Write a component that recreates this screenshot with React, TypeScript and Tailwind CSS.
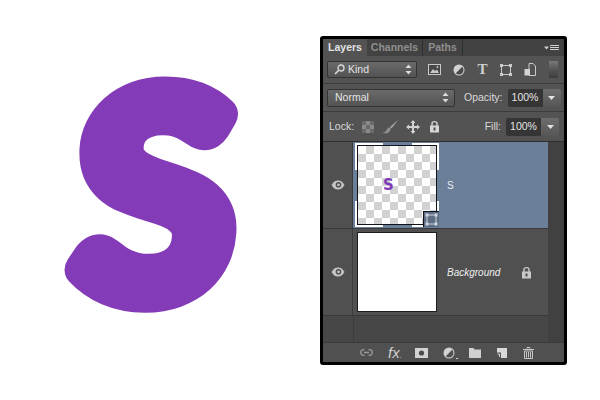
const FONT = "font-['Liberation_Sans',sans-serif]";

function Spinner() {
  return (
    <svg width="7" height="11" viewBox="0 0 7 11" className="shrink-0">
      <path d="M3.5 0.5 L6.5 4 H0.5 Z M3.5 10.5 L6.5 7 H0.5 Z" fill="#dcdcdc" />
    </svg>
  );
}

function Caret() {
  return (
    <svg width="7" height="4" viewBox="0 0 7 4">
      <path d="M0 0 H7 L3.5 4 Z" fill="#e2e2e2" />
    </svg>
  );
}

function PercentField() {
  return (
    <div className="flex h-[18px] w-[53px] rounded-[2px] overflow-hidden">
      <div className="flex w-[35px] items-center justify-center bg-[#353535] text-[10.5px] text-[#e4e4e4]">100%</div>
      <div className="flex flex-1 items-center justify-center bg-gradient-to-b from-[#6d6d6d] to-[#565656]">
        <Caret />
      </div>
    </div>
  );
}

function Eye() {
  return (
    <svg width="14" height="10" viewBox="0 0 14 10">
      <path d="M0.5 5 C3 1 5 0.5 7 0.5 C9 0.5 11 1 13.5 5 C11 9 9 9.5 7 9.5 C5 9.5 3 9 0.5 5 Z" fill="#c4c4c4" />
      <circle cx="7.5" cy="4.8" r="2.8" fill="#4f4f4f" />
      <circle cx="7.5" cy="4.8" r="1.4" fill="#c4c4c4" />
    </svg>
  );
}

function Padlock({ color = "#c9c9c9" }: { color?: string }) {
  return (
    <svg width="11" height="13" viewBox="0 0 11 13">
      <path d="M3 6 V3.5 C3 1 8 1 8 3.5 V6" fill="none" stroke={color} strokeWidth="1.4" />
      <rect x="1" y="5.5" width="9" height="7" fill={color} />
      <rect x="4.5" y="7.5" width="2" height="3" fill="#505050" />
    </svg>
  );
}

function AdjustmentDisc({ cut }: { cut: string }) {
  return (
    <svg width="12" height="12" viewBox="0 0 12 12">
      <circle cx="6" cy="6" r="5.5" fill="#d2d2d2" />
      <path d="M9.200 2.800 A4.500 4.500 0 0 1 2.800 9.200 Z" fill={cut} />
    </svg>
  );
}

function FilterIcons() {
  return (
    <div className="ml-[11px] flex items-center gap-[12px]">
      <svg width="13" height="11" viewBox="0 0 13 11">
        <rect x="0.5" y="0.5" width="12" height="10" fill="#474747" stroke="#c9c9c9" />
        <path d="M2 9 L5 5 L7 7 L9 5.5 L11 9 Z" fill="#c9c9c9" />
        <circle cx="9.5" cy="3" r="1" fill="#c9c9c9" />
      </svg>
      <AdjustmentDisc cut="#4a4a4a" />
      <span className="font-['Liberation_Serif',serif] text-[15px] font-bold leading-none text-[#cfcfcf] w-[11px] text-center">T</span>
      <svg width="12" height="12" viewBox="0 0 12 12">
        <rect x="1.5" y="1.5" width="9" height="9" fill="none" stroke="#c9c9c9" />
        <path d="M0 0 H3 V3 H0 Z M9 0 H12 V3 H9 Z M0 9 H3 V12 H0 Z M9 9 H12 V12 H9 Z" fill="#c9c9c9" />
      </svg>
      <svg width="12" height="13" viewBox="0 0 12 13">
        <path d="M5 0.5 H9 L11.5 3 V12.5 H5 Z" fill="none" stroke="#c9c9c9" />
        <path d="M0.5 6 H6 V12.5 H0.5 Z" fill="#d4d4d4" />
      </svg>
    </div>
  );
}

function LockRow() {
  return (
    <div className="flex h-[30px] items-center pl-[6px] pr-[5px] text-[10.5px] text-[#dadada] border-t border-[#3c3c3c]">
      <span>Lock:</span>
      <svg width="12" height="12" viewBox="0 0 12 12" className="ml-[8px]">
        <rect width="12" height="12" fill="#8a8a8a" />
        <path d="M0 0 H4 V4 H0 Z M8 0 H12 V4 H8 Z M4 4 H8 V8 H4 Z M0 8 H4 V12 H0 Z M8 8 H12 V12 H8 Z" fill="#6a6a6a" />
      </svg>
      <svg width="17" height="15" viewBox="0 0 17 15" className="ml-[8px]">
        <path d="M16.5 0.5 L8 8 L9.5 9.5 Z" fill="#a8a8a8" />
        <path d="M7.5 8.5 C5 8.5 5 11 3.5 12.5 C2.5 13.5 1 13.5 0 13.5 C3 15 7 15 9 10 Z" fill="#8f8f8f" />
      </svg>
      <svg width="14" height="14" viewBox="0 0 14 14" className="ml-[7px]">
        <path d="M7 0 L9.5 3 H8 V6 H11 V4.5 L14 7 L11 9.5 V8 H8 V11 H9.5 L7 14 L4.500 11 H6 V8 H3 V9.5 L0 7 L3 4.500 V6 H6 V3 H4.500 Z" fill="#d2d2d2" />
      </svg>
      <div className="ml-[9px]"><Padlock color="#d6d6d6" /></div>
      <span className="ml-auto mr-[5px]">Fill:</span>
      <PercentField />
    </div>
  );
}

function TextThumb() {
  return (
    <div className="relative ml-[2px] mt-[1px] h-[84px] w-[84px] border-2 border-white">
      {/* Gaps in the white selection frame, at the middle of each side */}
      <div className="absolute left-[26px] top-[-2px] h-[2px] w-[29px] bg-[#6b7f99]" />
      <div className="absolute left-[26px] bottom-[-2px] h-[2px] w-[29px] bg-[#6b7f99]" />
      <div className="absolute left-[-2px] top-[25px] h-[31px] w-[2px] bg-[#6b7f99]" />
      <div className="absolute right-[-2px] top-[25px] h-[31px] w-[2px] bg-[#6b7f99]" />
      <div className="flex h-full w-full items-center border border-[#10141c] bg-white bg-[conic-gradient(#d2d2d2_25%,#ffffff_0_50%,#d2d2d2_0_75%,#ffffff_0)] bg-[length:16px_16px] pl-[25px]">
        <span className="font-['DejaVu_Sans',sans-serif] text-[15px] font-bold leading-none text-[#7f3bb8]">S</span>
      </div>
      <div className="absolute bottom-[-2px] right-[-2px] flex h-[16px] w-[16px] items-center justify-center border-l border-t border-[#10141c] bg-[#5d6d83]">
        <svg width="13" height="13" viewBox="0 0 13 13">
          <rect x="2" y="2" width="9" height="9" fill="none" stroke="#cfd6df" />
          <path d="M0.500 0.500 H3.500 V3.500 H0.500 Z M9.500 0.500 H12.500 V3.500 H9.500 Z M0.500 9.500 H3.500 V12.500 H0.500 Z M9.500 9.500 H12.500 V12.500 H9.500 Z" fill="#cfd6df" />
        </svg>
      </div>
    </div>
  );
}

function Footer() {
  return (
    <div className="flex h-[20px] items-center border-t border-[#3b3b3b] bg-[#505050] pl-[37px]">
      <svg width="13" height="7" viewBox="0 0 13 7">
        <path d="M4.500 0.700 H3.500 A2.800 2.800 0 0 0 3.500 6.300 H4.500 M8.500 0.700 H9.500 A2.800 2.800 0 0 1 9.500 6.300 H8.500 M4 3.500 H9" fill="none" stroke="#9a9a9a" strokeWidth="1.300" />
      </svg>
      <span className="ml-[15px] w-[17px] font-['Liberation_Sans',sans-serif] text-[15px] italic leading-none text-[#cfcfcf]">fx<span className="text-[8px]">.</span></span>
      <svg width="13" height="10" viewBox="0 0 13 10" className="ml-[10px]">
        <rect width="13" height="10" fill="#d2d2d2" />
        <circle cx="6.500" cy="5" r="2.600" fill="#4a4a4a" />
      </svg>
      <div className="ml-[15px] flex w-[15px] items-end">
        <AdjustmentDisc cut="#505050" />
        <span className="ml-[1px] h-[1px] w-[2px] bg-[#cfcfcf]" />
      </div>
      <svg width="12" height="10" viewBox="0 0 12 10" className="ml-[11px]">
        <path d="M0 0 H4.500 L5.500 1.500 H12 V10 H0 Z" fill="#d0d0d0" />
      </svg>
      <svg width="10" height="10" viewBox="0 0 10 10" className="ml-[16px]">
        <path d="M0 0 H10 V10 H4 V4.500 H0 Z" fill="#d8d8d8" />
        <path d="M0.500 6 H2.500 V9" fill="none" stroke="#d8d8d8" />
      </svg>
      <svg width="11" height="12" viewBox="0 0 11 12" className="ml-[16px]">
        <path d="M4 1.500 V0.500 H7 V1.500 M0 2.500 H11" fill="none" stroke="#c8c8c8" />
        <path d="M1.500 4 H9.500 V11.500 H1.500 Z" fill="none" stroke="#c8c8c8" />
        <path d="M3.500 5 V10.500 M5.500 5 V10.500 M7.500 5 V10.500" stroke="#c8c8c8" />
      </svg>
    </div>
  );
}

function LayersPanel() {
  return (
    <div className={`${FONT} flex h-[329px] w-[247px] flex-col rounded-[3px] border-[3px] border-black bg-[#535353]`}>
      <div className="flex h-[17px] items-stretch bg-[#424242] text-[10.5px] font-bold text-[#8f8f8f]">
        <div className="flex w-[44px] items-center justify-center bg-[#535353] text-[#e2e2e2]">Layers</div>
        <div className="flex w-[56px] items-center justify-center border-r border-[#2f2f2f]">Channels</div>
        <div className="flex w-[40px] items-center justify-center border-r border-[#2f2f2f]">Paths</div>
        <div className="ml-auto flex items-center pr-[5px]">
          <svg width="15" height="6" viewBox="0 0 15 6">
            <path d="M0 1.500 H5 L2.500 4.500 Z" fill="#d0d0d0" />
            <path d="M6 0.500 H15 M6 2.500 H15 M6 4.500 H15" stroke="#d0d0d0" />
          </svg>
        </div>
      </div>

      <div className="flex h-[27px] items-center pl-[4px]">
        <div className="flex h-[17px] w-[90px] items-center rounded-[2px] border border-[#333333] bg-gradient-to-b from-[#6a6a6a] to-[#535353] pl-[6px] pr-[4px] text-[10.5px] text-[#e4e4e4]">
          <svg width="11" height="11" viewBox="0 0 11 11">
            <circle cx="7" cy="4" r="3" fill="none" stroke="#dcdcdc" strokeWidth="1.300" />
            <path d="M4.800 6.200 L1 10" stroke="#dcdcdc" strokeWidth="1.600" />
          </svg>
          <span className="ml-[3px]">Kind</span>
          <span className="ml-auto"><Spinner /></span>
        </div>
        <FilterIcons />
        <div className="ml-[13px] h-[17px] w-[9px] bg-gradient-to-b from-[#7a7a7a] via-[#555555] to-[#3c3c3c]" />
      </div>

      <div className="flex h-[28px] items-center border-t border-[#3c3c3c] pl-[4px] text-[10.5px] text-[#e4e4e4]">
        <div className="flex h-[18px] w-[128px] items-center justify-between rounded-[2px] border border-[#333333] bg-gradient-to-b from-[#6a6a6a] to-[#535353] pl-[7px] pr-[5px]">
          <span>Normal</span>
          <Spinner />
        </div>
        <span className="ml-[9px] mr-[5px] text-[#dadada]">Opacity:</span>
        <PercentField />
      </div>

      <LockRow />

      <div className="flex min-h-0 flex-1">
        <div className="flex w-[225px] flex-col border-t border-[#2e2e2e] bg-[#474747]">
          <div className="flex h-[86px] items-stretch bg-[#6b7f99]">
            <div className="flex w-[30px] items-center justify-center border-r border-[#3c3c3c] bg-[#505050]"><Eye /></div>
            <TextThumb />
            <span className="ml-[8px] self-center text-[10px] text-[#e8edf3]">S</span>
          </div>
          <div className="flex h-[88px] items-stretch border-y border-[#383838] bg-[#505050]">
            <div className="flex w-[30px] items-center justify-center border-r border-[#3c3c3c]"><Eye /></div>
            <div className="ml-[4px] mt-[3px] h-[80px] w-[80px] border border-[#1c1c1c] bg-white" />
            <span className="ml-[10px] self-center text-[10px] italic text-[#eeeeee]">Background</span>
            <div className="ml-auto mr-[16px] self-center"><Padlock /></div>
          </div>
          <div className="flex-1 pl-[30px]"><div className="h-full border-l border-[#3c3c3c]" /></div>
        </div>
        <div className="flex-1 border-t border-[#2e2e2e] bg-[#414141]" />
      </div>

      <Footer />
    </div>
  );
}

export default function App() {
  return (
    <div className="flex h-[400px] w-[600px] items-start overflow-hidden bg-white">
      <div className="w-[320px]">
        {/* Heavy rounded initial: a light letter thickened with a wide round-joined stroke */}
        <svg width="320" height="400" viewBox="0 0 320 400" aria-label="S">
          <text
            x="0"
            y="0"
            textAnchor="middle"
            fontFamily="Lato, sans-serif"
            fontWeight="400"
            fontSize="272"
            fill="#843bb7"
            stroke="#843bb7"
            strokeWidth="37"
            strokeLinejoin="round"
            transform="translate(150 292) skewX(-3) scale(1.04 1)"
          >
            S
          </text>
        </svg>
      </div>
      <div className="pt-[36px]">
        <LayersPanel />
      </div>
    </div>
  );
}
